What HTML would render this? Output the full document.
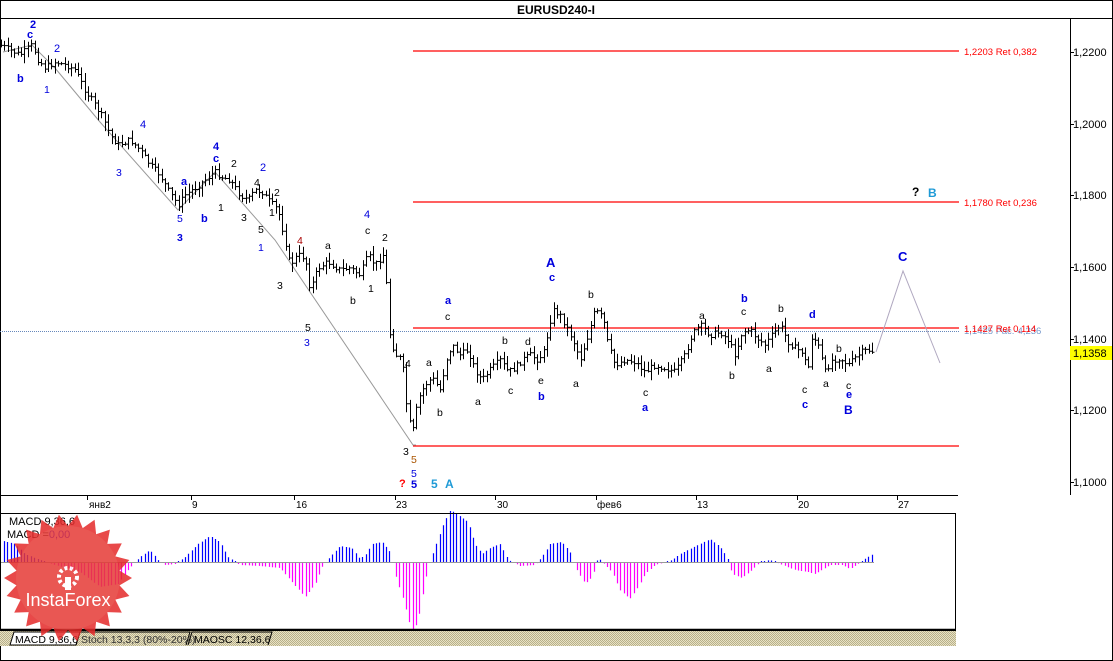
<!DOCTYPE html>
<html><head><meta charset="utf-8">
<style>
html,body{margin:0;padding:0;background:#fff;}
body{width:1113px;height:661px;overflow:hidden;position:relative;font-family:"Liberation Sans",sans-serif;}
svg{position:absolute;left:0;top:0;}
text{font-family:"Liberation Sans","DejaVu Sans",sans-serif;}
</style></head><body>
<svg id="s" width="1113" height="661" viewBox="0 0 1113 661" xmlns="http://www.w3.org/2000/svg">
<defs>
<pattern id="hatch" width="2" height="2" patternUnits="userSpaceOnUse"><rect width="2" height="2" fill="#e8e2c4"/><rect width="1" height="1" fill="#b8b08a"/><rect x="1" y="1" width="1" height="1" fill="#b8b08a"/></pattern>
</defs>
<rect x="0" y="0" width="1113" height="661" fill="#fff"/>
<rect x="0.5" y="0.5" width="1112" height="660" fill="none" stroke="#000"/>
<line x1="0" y1="18.5" x2="1113" y2="18.5" stroke="#000"/>
<text x="556" y="14" font-size="12" font-weight="bold" text-anchor="middle">EURUSD240-I</text>
<line x1="1070.5" y1="18" x2="1070.5" y2="495" stroke="#000"/>
<line x1="0" y1="495.5" x2="958" y2="495.5" stroke="#000"/>
<g font-size="11" fill="#000">
<line x1="1070" y1="52.5" x2="1074" y2="52.5" stroke="#000"/><text x="1073" y="56">1,2200</text>
<line x1="1070" y1="124.5" x2="1074" y2="124.5" stroke="#000"/><text x="1073" y="128">1,2000</text>
<line x1="1070" y1="195.5" x2="1074" y2="195.5" stroke="#000"/><text x="1073" y="199">1,1800</text>
<line x1="1070" y1="267.5" x2="1074" y2="267.5" stroke="#000"/><text x="1073" y="271">1,1600</text>
<line x1="1070" y1="339.5" x2="1074" y2="339.5" stroke="#000"/><text x="1073" y="343">1,1400</text>
<line x1="1070" y1="410.5" x2="1074" y2="410.5" stroke="#000"/><text x="1073" y="414">1,1200</text>
<line x1="1070" y1="482.5" x2="1074" y2="482.5" stroke="#000"/><text x="1073" y="486">1,1000</text>
<rect x="1070" y="346" width="42" height="14" fill="#ffff00"/><text x="1073" y="357">1,1358</text>
</g>
<g stroke="#000">
<line x1="87.5" y1="495" x2="87.5" y2="500"/><line x1="191.5" y1="495" x2="191.5" y2="500"/><line x1="294.5" y1="495" x2="294.5" y2="500"/><line x1="395.5" y1="495" x2="395.5" y2="500"/><line x1="495.5" y1="495" x2="495.5" y2="500"/><line x1="596.5" y1="495" x2="596.5" y2="500"/><line x1="696.5" y1="495" x2="696.5" y2="500"/><line x1="797.5" y1="495" x2="797.5" y2="500"/><line x1="897.5" y1="495" x2="897.5" y2="500"/>
</g>
<g font-size="10" fill="#000">
<text x="89" y="508">янв2</text><text x="192" y="508">9</text><text x="296" y="508">16</text><text x="396" y="508">23</text><text x="497" y="508">30</text><text x="597" y="508">фев6</text><text x="697" y="508">13</text><text x="798" y="508">20</text><text x="898" y="508">27</text>
</g>
<g stroke="#ff0000" stroke-width="1.2">
<line x1="413" y1="51" x2="959" y2="51"/>
<line x1="413" y1="202" x2="959" y2="202"/>
<line x1="413" y1="328" x2="959" y2="328"/>
<line x1="413" y1="446" x2="959" y2="446"/>
</g>
<line x1="0" y1="331.5" x2="959" y2="331.5" stroke="#6688bb" stroke-width="1" stroke-dasharray="1,1"/>
<g font-size="9.5" fill="#ff0000">
<text x="964" y="55">1,2203 Ret 0,382</text>
<text x="964" y="206">1,1780 Ret 0,236</text>
<text x="964" y="334" fill="#7799cc">1,1425 Рас.-4,236</text>
<text x="964" y="332">1,1427 Ret 0,114</text>
</g>
<polyline points="3,52 32,45 55,68 100,122 178,210 215,172 275,240 413,445 416,445" fill="none" stroke="#999" stroke-width="1"/>
<polyline points="876,352 903,271 940,363" fill="none" stroke="#b0a8c0" stroke-width="1"/>
<g id="bars" stroke="#000" stroke-width="1" fill="none"></g>
<g id="macd"></g>
<g font-size="10.5" fill="#000">
<text x="30" y="28" fill="#0000dd" font-weight="bold" font-size="11">2</text>
<text x="27" y="38" fill="#0000dd" font-weight="bold" font-size="11">c</text>
<text x="54" y="52" fill="#0000dd" font-size="11">2</text>
<text x="17" y="82" fill="#0000dd" font-weight="bold" font-size="11">b</text>
<text x="44" y="93" fill="#0000dd">1</text>
<text x="140" y="128" fill="#0000dd" font-size="11">4</text>
<text x="116" y="176" fill="#0000dd">3</text>
<text x="213" y="150" fill="#0000dd" font-weight="bold" font-size="11">4</text>
<text x="213" y="162" fill="#0000dd" font-weight="bold" font-size="11">c</text>
<text x="181" y="185" fill="#0000dd" font-weight="bold" font-size="11">a</text>
<text x="177" y="222" fill="#0000dd">5</text>
<text x="177" y="241" fill="#0000dd" font-weight="bold">3</text>
<text x="201" y="222" fill="#0000dd" font-weight="bold" font-size="11">b</text>
<text x="231" y="167">2</text>
<text x="218" y="211">1</text>
<text x="260" y="171" fill="#0000dd" font-size="11">2</text>
<text x="254" y="186">4</text>
<text x="274" y="196">2</text>
<text x="241" y="221">3</text>
<text x="258" y="233">5</text>
<text x="269" y="216">1</text>
<text x="258" y="251" fill="#0000dd">1</text>
<text x="297" y="244" fill="#aa0000">4</text>
<text x="277" y="289">3</text>
<text x="364" y="218" fill="#0000dd" font-size="11">4</text>
<text x="365" y="234">c</text>
<text x="382" y="241">2</text>
<text x="325" y="249">a</text>
<text x="350" y="304">b</text>
<text x="368" y="292">1</text>
<text x="305" y="331">5</text>
<text x="304" y="346" fill="#0000dd">3</text>
<text x="405" y="367">4</text>
<text x="403" y="455">3</text>
<text x="411" y="463" fill="#aa5500">5</text>
<text x="411" y="477" fill="#0000dd">5</text>
<text x="399" y="487" fill="#ff0000" font-weight="bold" font-size="11">?</text>
<text x="411" y="488" fill="#0000dd" font-weight="bold" font-size="11">5</text>
<text x="431" y="488" fill="#1e9ad6" font-weight="bold" font-size="12">5</text>
<text x="445" y="488" fill="#1e9ad6" font-weight="bold" font-size="12">A</text>
<text x="445" y="304" fill="#0000dd" font-weight="bold" font-size="11">a</text>
<text x="445" y="320">c</text>
<text x="426" y="366">a</text>
<text x="437" y="416">b</text>
<text x="475" y="405">a</text>
<text x="502" y="344">b</text>
<text x="508" y="394">c</text>
<text x="525" y="345">d</text>
<text x="538" y="384">e</text>
<text x="538" y="400" fill="#0000dd" font-weight="bold" font-size="11">b</text>
<text x="546" y="267" fill="#0000dd" font-weight="bold" font-size="13">A</text>
<text x="549" y="281" fill="#0000dd" font-weight="bold" font-size="11">c</text>
<text x="588" y="298">b</text>
<text x="573" y="387">a</text>
<text x="643" y="396">c</text>
<text x="642" y="411" fill="#0000dd" font-weight="bold" font-size="11">a</text>
<text x="699" y="319">a</text>
<text x="741" y="302" fill="#0000dd" font-weight="bold" font-size="11">b</text>
<text x="741" y="315">c</text>
<text x="729" y="379">b</text>
<text x="766" y="372">a</text>
<text x="778" y="312">b</text>
<text x="809" y="318" fill="#0000dd" font-weight="bold" font-size="11">d</text>
<text x="802" y="393">c</text>
<text x="802" y="408" fill="#0000dd" font-weight="bold" font-size="11">c</text>
<text x="823" y="387">a</text>
<text x="836" y="352">b</text>
<text x="846" y="389">c</text>
<text x="846" y="398" fill="#0000dd" font-weight="bold" font-size="11">e</text>
<text x="844" y="414" fill="#0000dd" font-weight="bold" font-size="12">B</text>
<text x="912" y="196" font-weight="bold" font-size="12" font-family="Liberation Serif">?</text>
<text x="928" y="197" fill="#1e9ad6" font-weight="bold" font-size="12" font-family="Liberation Serif">B</text>
<text x="898" y="261" fill="#0000dd" font-weight="bold" font-size="13" font-family="Liberation Serif">C</text>
</g>
<rect x="0.5" y="513.5" width="955" height="117" fill="none" stroke="#000"/>
<line x1="0" y1="629.5" x2="956" y2="629.5" stroke="#000" stroke-width="1.5"/>
<rect x="0" y="631" width="956" height="15" fill="url(#hatch)"/>
<line x1="0" y1="660.5" x2="1113" y2="660.5" stroke="#000"/>
<text x="9" y="525" font-size="11">MACD 9,36,6</text>
<text x="7" y="538" font-size="11">MACD =<tspan fill="#0000ff">0,00</tspan></text>
<g font-size="10.5">
<path d="M10,645 L14,632 L80,632 L76,645 Z" fill="#fff" stroke="#000"/>
<text x="15" y="643">MACD 9,36,6</text>
<path d="M76,645 L80,632 L190,632 L186,645" fill="none" stroke="#000"/>
<text x="81" y="643" fill="#333">Stoch 13,3,3 (80%-20%)</text>
<path d="M188,645 L192,632 L272,632 L268,645" fill="none" stroke="#000"/>
<text x="194" y="643">MAOSC 12,36,6</text>
</g>
<g opacity="0.85">
<polygon id="star" fill="#e52a2a"/>
<circle cx="68" cy="578" r="52" fill="#e63a36"/>
<g fill="#fff">
<circle cx="68" cy="577" r="9" fill="none" stroke="#fff" stroke-width="4" stroke-dasharray="3,2.5"/>
<rect x="65" y="577" width="6" height="13"/>
<text x="68" y="606" font-size="18" text-anchor="middle" fill="#fff">InstaForex</text>
</g>
</g>
</svg>
<script>
var ns="http://www.w3.org/2000/svg";
var P=[[0,45],[10,50],[20,55],[32,45],[38,60],[45,68],[55,62],[68,66],[75,70],[85,90],[95,105],[103,118],[110,135],[118,145],[130,140],[140,150],[150,165],[160,175],[168,190],[178,205],[185,195],[195,188],[205,180],[215,172],[222,177],[230,180],[240,195],[248,200],[255,190],[262,192],[268,200],[278,210],[285,240],[290,265],[298,255],[305,258],[310,290],[318,268],[328,262],[340,270],[350,268],[360,275],[368,255],[375,265],[383,255],[386,280],[390,340],[396,355],[402,360],[408,420],[413,430],[418,400],[425,385],[432,378],[440,390],[446,360],[452,345],[460,355],[468,350],[475,370],[482,380],[490,370],[500,360],[508,372],[515,368],[522,360],[530,355],[538,360],[545,350],[548,330],[553,310],[560,315],[568,330],[575,345],[580,360],[588,335],[595,310],[603,318],[608,345],[615,365],[625,360],[635,362],[645,372],[655,365],[665,368],[675,372],[685,355],[692,335],[700,325],[710,335],[720,332],[728,340],[735,355],[742,332],[750,330],[757,338],[765,345],[772,335],[780,325],[788,342],[795,348],[802,352],[808,370],[812,335],[818,345],[825,372],[832,360],[840,358],[848,365],[855,358],[862,352],[868,350],[874,352]];
function py(x){for(var i=0;i<P.length-1;i++){if(x>=P[i][0]&&x<=P[i+1][0]){var t=(x-P[i][0])/(P[i+1][0]-P[i][0]);return P[i][1]+t*(P[i+1][1]-P[i][1]);}}return P[P.length-1][1];}
var seed=7;function rnd(){seed=(seed*9301+49297)%233280;return seed/233280;}
var g=document.getElementById("bars"),d="";
var prev=py(0);
for(var x=1;x<=874;x+=3.35){var c=py(x)+(rnd()-0.5)*6;var hi=Math.min(prev,c)-rnd()*8-1,lo=Math.max(prev,c)+rnd()*8+1;var xx=Math.round(x)+0.5;
d+="M"+xx+","+hi.toFixed(1)+"V"+lo.toFixed(1)+"M"+(xx-2)+","+prev.toFixed(1)+"H"+xx+"M"+xx+","+c.toFixed(1)+"H"+(xx+2);prev=c;}
var p=document.createElementNS(ns,"path");p.setAttribute("d",d);g.appendChild(p);
var M=[[0,22],[15,18],[25,8],[40,2],[55,-3],[80,-10],[100,-25],[118,-22],[128,-8],[140,5],[150,12],[158,2],[165,-3],[175,-2],[185,5],[198,18],[210,26],[220,20],[228,5],[240,-3],[260,-4],[280,-6],[292,-20],[305,-35],[315,-22],[322,-5],[330,5],[340,16],[352,14],[360,3],[366,8],[372,18],[382,20],[390,10],[396,-15],[404,-40],[412,-70],[418,-60],[424,-25],[428,-5],[435,15],[442,35],[450,52],[458,47],[468,40],[475,18],[482,8],[490,14],[500,18],[508,2],[520,-4],[535,-3],[542,5],[550,18],[562,20],[570,10],[575,-5],[585,-22],[592,-15],[598,5],[604,-2],[612,-10],[620,-28],[630,-37],[638,-25],[645,-12],[655,-3],[672,2],[680,8],[690,13],[700,18],[710,23],[720,15],[727,5],[732,-12],[742,-16],[752,-8],[760,0],[770,2],[780,-2],[795,-8],[808,-10],[815,-12],[822,-8],[830,-3],[842,-3],[850,-7],[858,-2],[866,4],[873,8]];
function my(x){for(var i=0;i<M.length-1;i++){if(x>=M[i][0]&&x<=M[i+1][0]){var t=(x-M[i][0])/(M[i+1][0]-M[i][0]);return M[i][1]+t*(M[i+1][1]-M[i][1]);}}return 0;}
var mg=document.getElementById("macd"),db="",dm="";
for(var x=4;x<=874;x+=3.35){var h=my(x);var xx=Math.round(x)+0.5;if(Math.abs(h)<1)h=h<0?-1:1;
if(h>0)db+="M"+xx+",562V"+(562-h).toFixed(1);else dm+="M"+xx+",562V"+(562-h).toFixed(1);}
var pb=document.createElementNS(ns,"path");pb.setAttribute("d",db);pb.setAttribute("stroke","#0000ff");pb.setAttribute("stroke-width","1.2");mg.appendChild(pb);
var pm=document.createElementNS(ns,"path");pm.setAttribute("d",dm);pm.setAttribute("stroke","#ff00ff");pm.setAttribute("stroke-width","1.2");mg.appendChild(pm);
var zl=document.createElementNS(ns,"line");zl.setAttribute("x1","0");zl.setAttribute("x2","874");zl.setAttribute("y1","562.5");zl.setAttribute("y2","562.5");zl.setAttribute("stroke","#999");mg.appendChild(zl);
var pts=[],n=22;for(var i=0;i<n*2;i++){var r=i%2?52:64,a=Math.PI*i/n;pts.push((68+r*Math.cos(a)).toFixed(1)+","+(578+r*Math.sin(a)).toFixed(1));}
document.getElementById("star").setAttribute("points",pts.join(" "));
</script>
</body></html>
